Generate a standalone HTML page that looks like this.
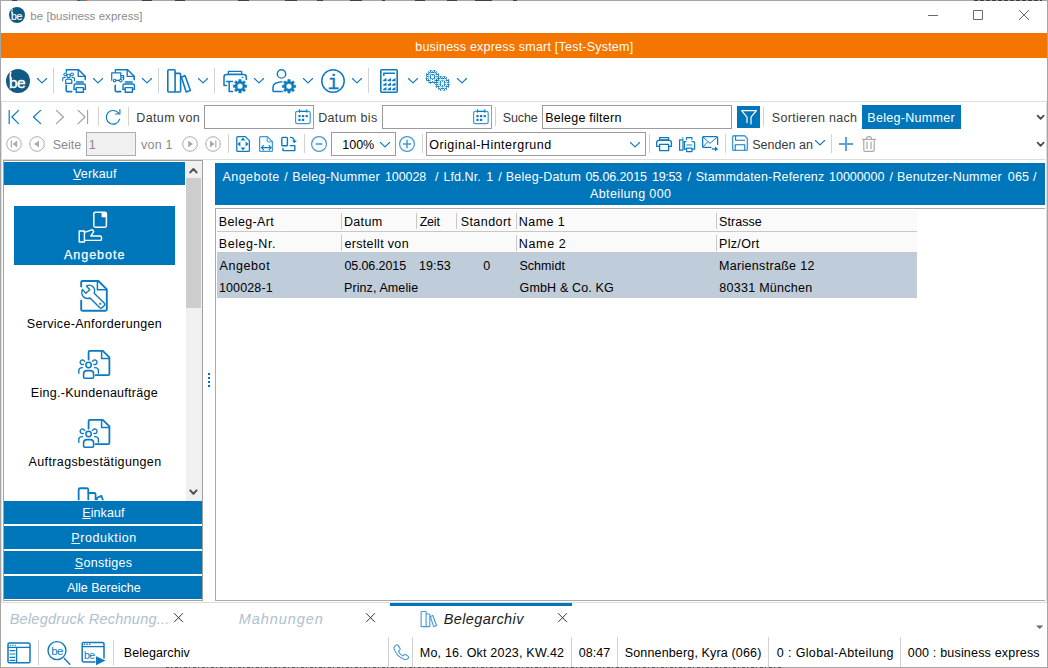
<!DOCTYPE html>
<html lang="de">
<head>
<meta charset="utf-8">
<title>be [business express]</title>
<style>
html,body{margin:0;padding:0;}
body{width:1048px;height:668px;overflow:hidden;background:#fff;position:relative;font-family:"Liberation Sans",sans-serif;}
#w{position:absolute;left:0;top:0;width:1048px;height:668px;overflow:hidden;background:#fff;}
#w div{position:absolute;}
#w svg{position:absolute;overflow:visible;}
.t{position:absolute;white-space:pre;line-height:20px;font-family:"Liberation Sans",sans-serif;}
.t u{text-decoration:underline;text-underline-offset:1px;}
</style>
</head>
<body>
<div id="w">
<div style="left:1px;top:33px;width:1046px;height:25px;background:#f47500;"></div>
<div style="left:1px;top:101px;width:1046px;height:1px;background:#dcdcdc;"></div>
<div style="left:1px;top:101px;width:1px;height:502px;background:#dcdcdc;"></div>
<div style="left:1046px;top:101px;width:1px;height:502px;background:#dcdcdc;"></div>
<div style="left:1px;top:602px;width:1046px;height:1px;background:#dcdcdc;"></div>
<div style="left:3px;top:159px;width:1042px;height:1px;background:#dcdcdc;"></div>
<div style="left:53px;top:68px;width:1px;height:25px;background:#d2d2d2;"></div>
<div style="left:158px;top:68px;width:1px;height:25px;background:#d2d2d2;"></div>
<div style="left:214px;top:68px;width:1px;height:25px;background:#d2d2d2;"></div>
<div style="left:368px;top:68px;width:1px;height:25px;background:#d2d2d2;"></div>
<div style="left:98px;top:107px;width:1px;height:19px;background:#d2d2d2;"></div>
<div style="left:128px;top:107px;width:1px;height:19px;background:#d2d2d2;"></div>
<div style="left:495px;top:107px;width:1px;height:19px;background:#d2d2d2;"></div>
<div style="left:763px;top:107px;width:1px;height:19px;background:#d2d2d2;"></div>
<div style="left:228px;top:134px;width:1px;height:19px;background:#d2d2d2;"></div>
<div style="left:304px;top:134px;width:1px;height:19px;background:#d2d2d2;"></div>
<div style="left:422px;top:134px;width:1px;height:19px;background:#d2d2d2;"></div>
<div style="left:649px;top:134px;width:1px;height:19px;background:#d2d2d2;"></div>
<div style="left:725px;top:134px;width:1px;height:19px;background:#d2d2d2;"></div>
<div style="left:831px;top:134px;width:1px;height:19px;background:#d2d2d2;"></div>
<div style="left:204px;top:105px;width:110px;height:24px;background:#fff;border:1px solid #9a9aa0;box-sizing:border-box"></div>
<div style="left:382px;top:105px;width:110px;height:24px;background:#fff;border:1px solid #9a9aa0;box-sizing:border-box"></div>
<div style="left:542px;top:105px;width:190px;height:24px;background:#fff;border:1px solid #9a9aa0;box-sizing:border-box"></div>
<div style="left:737px;top:106px;width:23px;height:22px;background:#0076ba;"></div>
<div style="left:862px;top:105px;width:99px;height:24px;background:#0076ba;"></div>
<div style="left:86px;top:132px;width:50px;height:24px;background:#f0f0f0;border:1px solid #adadad;box-sizing:border-box"></div>
<div style="left:331px;top:132px;width:65px;height:24px;background:#fff;border:1px solid #9a9aa0;box-sizing:border-box"></div>
<div style="left:426px;top:132px;width:220px;height:24px;background:#fff;border:1px solid #9a9aa0;box-sizing:border-box"></div>
<div style="left:3px;top:160px;width:200px;height:441px;background:#fff;border:1px solid #a0a0a0;box-sizing:border-box"></div>
<div style="left:4px;top:162px;width:181px;height:23px;background:#0076ba;"></div>
<div style="left:186px;top:161px;width:16px;height:340px;background:#f0f0f0;"></div>
<div style="left:186px;top:178px;width:15px;height:130px;background:#cdcdcd;"></div>
<div style="left:14px;top:206px;width:161px;height:59px;background:#0076ba;"></div>
<div style="left:4px;top:501px;width:198px;height:23px;background:#0076ba;"></div>
<div style="left:4px;top:526px;width:198px;height:23px;background:#0076ba;"></div>
<div style="left:4px;top:551px;width:198px;height:23px;background:#0076ba;"></div>
<div style="left:4px;top:576px;width:198px;height:23px;background:#0076ba;"></div>
<div style="left:215px;top:163px;width:830px;height:42px;background:#0076ba;"></div>
<div style="left:215px;top:208px;width:830px;height:1px;background:#a9abb3;"></div>
<div style="left:215px;top:208px;width:1px;height:393px;background:#a9abb3;"></div>
<div style="left:215px;top:600px;width:830px;height:1px;background:#a9abb3;"></div>
<div style="left:217px;top:210px;width:700px;height:21px;background:#fafafa;"></div>
<div style="left:217px;top:231px;width:700px;height:1px;background:#c8c8c8;"></div>
<div style="left:217px;top:232px;width:700px;height:20px;background:#fafafa;"></div>
<div style="left:217px;top:252px;width:700px;height:1px;background:#c4c8cc;"></div>
<div style="left:217px;top:253px;width:700px;height:44px;background:#bfccd9;"></div>
<div style="left:217px;top:297px;width:700px;height:1px;background:#c6c8ca;"></div>
<div style="left:341px;top:213px;width:1px;height:16px;background:#c9c9c9;"></div>
<div style="left:416px;top:213px;width:1px;height:16px;background:#c9c9c9;"></div>
<div style="left:456px;top:213px;width:1px;height:16px;background:#c9c9c9;"></div>
<div style="left:516px;top:213px;width:1px;height:16px;background:#c9c9c9;"></div>
<div style="left:716px;top:213px;width:1px;height:16px;background:#c9c9c9;"></div>
<div style="left:341px;top:235px;width:1px;height:16px;background:#c9c9c9;"></div>
<div style="left:516px;top:235px;width:1px;height:16px;background:#c9c9c9;"></div>
<div style="left:716px;top:235px;width:1px;height:16px;background:#c9c9c9;"></div>
<div style="left:390px;top:603px;width:182px;height:3px;background:#0076ba;"></div>
<div style="left:38px;top:640px;width:1px;height:25px;background:#d2d2d2;"></div>
<div style="left:113px;top:640px;width:1px;height:25px;background:#d2d2d2;"></div>
<div style="left:388px;top:637px;width:1px;height:30px;background:#d2d2d2;"></div>
<div style="left:412px;top:637px;width:1px;height:30px;background:#d2d2d2;"></div>
<div style="left:571px;top:637px;width:1px;height:30px;background:#d2d2d2;"></div>
<div style="left:617px;top:637px;width:1px;height:30px;background:#d2d2d2;"></div>
<div style="left:768px;top:637px;width:1px;height:30px;background:#d2d2d2;"></div>
<div style="left:900px;top:637px;width:1px;height:30px;background:#d2d2d2;"></div>
<div style="left:0px;top:0px;width:1048px;height:1px;background:#a5a5a5;"></div>
<div style="left:0px;top:0px;width:1px;height:668px;background:#a5a5a5;"></div>
<div style="left:1047px;top:0px;width:1px;height:668px;background:#a5a5a5;"></div>
<div style="left:0px;top:667px;width:1048px;height:1px;background:#a5a5a5;"></div>
<div style="left:12px;top:0px;width:5px;height:1px;background:#3a3e58;"></div>
<div style="left:142px;top:0px;width:10px;height:1px;background:#3a3e58;"></div>
<div style="left:175px;top:0px;width:10px;height:1px;background:#3a3e58;"></div>
<div style="left:238px;top:0px;width:11px;height:1px;background:#3a3e58;"></div>
<div style="left:285px;top:0px;width:12px;height:1px;background:#3a3e58;"></div>
<div style="left:317px;top:0px;width:6px;height:1px;background:#3a3e58;"></div>
<div style="left:350px;top:0px;width:12px;height:1px;background:#3a3e58;"></div>
<div style="left:382px;top:0px;width:3px;height:1px;background:#3a3e58;"></div>
<div style="left:415px;top:0px;width:10px;height:1px;background:#3a3e58;"></div>
<div style="left:447px;top:0px;width:10px;height:1px;background:#3a3e58;"></div>
<div style="left:475px;top:0px;width:17px;height:1px;background:#3a3e58;"></div>
<div style="left:513px;top:0px;width:4px;height:1px;background:#3a3e58;"></div>
<div style="left:77px;top:0px;width:3px;height:1px;background:#6a3a90;"></div>
<div style="left:80px;top:0px;width:3px;height:1px;background:#1e90c0;"></div>
<div style="left:83px;top:0px;width:4px;height:1px;background:#d06020;"></div>
<div style="left:974px;top:0;width:68px;height:1px;background:repeating-linear-gradient(90deg,#3a3e58 0 4px,#9a9a9a 4px 6px)"></div>
<div style="left:166px;top:667px;width:616px;height:1px;background:repeating-linear-gradient(90deg,#555 0 3px,#a5a5a5 3px 5px,#555 5px 6px,#a5a5a5 6px 9px)"></div>
<svg width="1048" height="668" viewBox="0 0 1048 668" style="left:0;top:0">
<circle cx="17" cy="15" r="8" fill="#0f5b84" stroke="none" stroke-width="0"/>
<text x="11" y="19.6" font-family="'Liberation Sans',sans-serif" font-size="10.5" letter-spacing="-0.4" fill="#fff" stroke="#fff" stroke-width="0.2">be</text>
<path d="M12.1 9.4 Q11.5 11.5 12.1 13.6" fill="none" stroke="#fff" stroke-width="1" stroke-linecap="round" stroke-linejoin="round"/>
<path d="M928 15.5 H938" fill="none" stroke="#6a6a6a" stroke-width="1"/>
<path d="M973.5 10.5 H982.5 V19.5 H973.5 Z" fill="none" stroke="#6a6a6a" stroke-width="1"/>
<path d="M1019 10 L1029 20 M1029 10 L1019 20" fill="none" stroke="#6a6a6a" stroke-width="1"/>
<circle cx="18" cy="81" r="12" fill="#0f5b84" stroke="none" stroke-width="0"/>
<text x="9" y="88" font-family="'Liberation Sans',sans-serif" font-size="15.5" letter-spacing="-0.6" fill="#fff" stroke="#fff" stroke-width="0.35">be</text>
<path d="M10.7 72.2 Q9.7 76 10.7 80" fill="none" stroke="#fff" stroke-width="1.5" stroke-linecap="round" stroke-linejoin="round"/>
<path d="M37.4 78.5 l4.6 4.4 l4.6 -4.4" fill="none" stroke="#0d7abf" stroke-width="1.1" stroke-linecap="round" stroke-linejoin="round"/>
<path d="M93.4 78.5 l4.6 4.4 l4.6 -4.4" fill="none" stroke="#0d7abf" stroke-width="1.1" stroke-linecap="round" stroke-linejoin="round"/>
<path d="M142.4 78.5 l4.6 4.4 l4.6 -4.4" fill="none" stroke="#0d7abf" stroke-width="1.1" stroke-linecap="round" stroke-linejoin="round"/>
<path d="M198.4 78.5 l4.6 4.4 l4.6 -4.4" fill="none" stroke="#0d7abf" stroke-width="1.1" stroke-linecap="round" stroke-linejoin="round"/>
<path d="M254.4 78.5 l4.6 4.4 l4.6 -4.4" fill="none" stroke="#0d7abf" stroke-width="1.1" stroke-linecap="round" stroke-linejoin="round"/>
<path d="M303.4 78.5 l4.6 4.4 l4.6 -4.4" fill="none" stroke="#0d7abf" stroke-width="1.1" stroke-linecap="round" stroke-linejoin="round"/>
<path d="M352.4 78.5 l4.6 4.4 l4.6 -4.4" fill="none" stroke="#0d7abf" stroke-width="1.1" stroke-linecap="round" stroke-linejoin="round"/>
<path d="M408.4 78.5 l4.6 4.4 l4.6 -4.4" fill="none" stroke="#0d7abf" stroke-width="1.1" stroke-linecap="round" stroke-linejoin="round"/>
<path d="M457.4 78.5 l4.6 4.4 l4.6 -4.4" fill="none" stroke="#0d7abf" stroke-width="1.1" stroke-linecap="round" stroke-linejoin="round"/>
<path d="M4.6 0.8 H16.6 L23.2 7.2 V10.6" fill="none" stroke="#0d7abf" stroke-width="1.6" stroke-linecap="round" stroke-linejoin="round" transform="translate(62 69)"/>
<path d="M16.2 1.2 V7.4 H22.8" fill="none" stroke="#0d7abf" stroke-width="1.3" stroke-linecap="round" stroke-linejoin="round" transform="translate(62 69)"/>
<path d="M4.2 16.4 V21.6 Q4.2 22.6 5.2 22.6 H9.8" fill="none" stroke="#0d7abf" stroke-width="1.6" stroke-linecap="round" stroke-linejoin="round" transform="translate(62 69)"/>
<path d="M14.4 13 H21.2" fill="none" stroke="#0d7abf" stroke-width="1.6" stroke-linecap="round" stroke-linejoin="round" transform="translate(62 69)"/>
<path d="M12 20.4 V16.6 Q12 15 13.6 15 H21.8 Q23.4 15 23.4 16.6 V20.4" fill="none" stroke="#0d7abf" stroke-width="1.4" stroke-linecap="round" stroke-linejoin="round" transform="translate(62 69)"/>
<path d="M14.2 18.6 H21.4 V23.3 H14.2 Z" fill="none" stroke="#0d7abf" stroke-width="1.4" stroke-linecap="round" stroke-linejoin="round" transform="translate(62 69)"/>
<path d="M12 20.4 H14 M21.6 20.4 H23.4" fill="none" stroke="#0d7abf" stroke-width="1.2" stroke-linecap="round" stroke-linejoin="round" transform="translate(62 69)"/>
<path d="M4.4 1 V3" fill="none" stroke="#0d7abf" stroke-width="1.3" stroke-linecap="round" stroke-linejoin="round" transform="translate(62 69)"/>
<circle cx="3.3" cy="5.4" r="1.4" fill="none" stroke="#0d7abf" stroke-width="1.1" transform="translate(62 69)"/>
<circle cx="10" cy="5.4" r="1.4" fill="none" stroke="#0d7abf" stroke-width="1.1" transform="translate(62 69)"/>
<circle cx="6.6" cy="6.9" r="1.7" fill="none" stroke="#0d7abf" stroke-width="1.1" transform="translate(62 69)"/>
<path d="M0.7 11.8 V9.6 Q0.7 8.4 3.2 8.4" fill="none" stroke="#0d7abf" stroke-width="1.1" stroke-linecap="round" stroke-linejoin="round" transform="translate(62 69)"/>
<path d="M12.5 11.8 V9.6 Q12.5 8.4 10 8.4" fill="none" stroke="#0d7abf" stroke-width="1.1" stroke-linecap="round" stroke-linejoin="round" transform="translate(62 69)"/>
<path d="M3.6 14.4 V12 Q3.6 10.2 5.4 10.2 H7.8 Q9.8 10.2 9.8 12 V14.4 Z" fill="none" stroke="#0d7abf" stroke-width="1.2" stroke-linecap="round" stroke-linejoin="round" transform="translate(62 69)"/>
<path d="M4.6 0.8 H16.6 L23.2 7.2 V10.6" fill="none" stroke="#0d7abf" stroke-width="1.6" stroke-linecap="round" stroke-linejoin="round" transform="translate(111 69)"/>
<path d="M16.2 1.2 V7.4 H22.8" fill="none" stroke="#0d7abf" stroke-width="1.3" stroke-linecap="round" stroke-linejoin="round" transform="translate(111 69)"/>
<path d="M4.2 16.4 V21.6 Q4.2 22.6 5.2 22.6 H9.8" fill="none" stroke="#0d7abf" stroke-width="1.6" stroke-linecap="round" stroke-linejoin="round" transform="translate(111 69)"/>
<path d="M14.4 13 H21.2" fill="none" stroke="#0d7abf" stroke-width="1.6" stroke-linecap="round" stroke-linejoin="round" transform="translate(111 69)"/>
<path d="M12 20.4 V16.6 Q12 15 13.6 15 H21.8 Q23.4 15 23.4 16.6 V20.4" fill="none" stroke="#0d7abf" stroke-width="1.4" stroke-linecap="round" stroke-linejoin="round" transform="translate(111 69)"/>
<path d="M14.2 18.6 H21.4 V23.3 H14.2 Z" fill="none" stroke="#0d7abf" stroke-width="1.4" stroke-linecap="round" stroke-linejoin="round" transform="translate(111 69)"/>
<path d="M12 20.4 H14 M21.6 20.4 H23.4" fill="none" stroke="#0d7abf" stroke-width="1.2" stroke-linecap="round" stroke-linejoin="round" transform="translate(111 69)"/>
<path d="M4.4 1 V3.2" fill="none" stroke="#0d7abf" stroke-width="1.3" stroke-linecap="round" stroke-linejoin="round" transform="translate(111 69)"/>
<path d="M0.7 11.2 V3.9 H9.8 V10.4" fill="none" stroke="#0d7abf" stroke-width="1.2" stroke-linecap="round" stroke-linejoin="round" transform="translate(111 69)"/>
<path d="M10 6.6 H12.6 V10.6" fill="none" stroke="#0d7abf" stroke-width="1.2" stroke-linecap="round" stroke-linejoin="round" transform="translate(111 69)"/>
<circle cx="3.6" cy="11.6" r="1.3" fill="none" stroke="#0d7abf" stroke-width="1.1" transform="translate(111 69)"/>
<circle cx="9.8" cy="11.6" r="1.3" fill="none" stroke="#0d7abf" stroke-width="1.1" transform="translate(111 69)"/>
<path d="M5.2 11.4 H8.2" fill="none" stroke="#0d7abf" stroke-width="1.1" stroke-linecap="round" stroke-linejoin="round" transform="translate(111 69)"/>
<path d="M11 8.6 H12.4" fill="none" stroke="#0d7abf" stroke-width="1" stroke-linecap="round" stroke-linejoin="round" transform="translate(111 69)"/>
<path d="M1.9 0.8 H7 Q8.1 0.8 8.1 1.9 V21.9 Q8.1 23 7 23 H1.9 Q0.8 23 0.8 21.9 V1.9 Q0.8 0.8 1.9 0.8 Z" fill="none" stroke="#0d7abf" stroke-width="1.6" stroke-linecap="round" stroke-linejoin="round" transform="translate(167 69) scale(1)"/>
<path d="M8.3 4.4 H12.6 Q13.6 4.4 13.6 5.4 V22 Q13.6 23 12.6 23 H8.3" fill="none" stroke="#0d7abf" stroke-width="1.6" stroke-linecap="round" stroke-linejoin="round" transform="translate(167 69) scale(1)"/>
<path d="M14.4 8.2 L18 6.6 L23.4 21.4 L19.2 23 Z" fill="none" stroke="#0d7abf" stroke-width="1.6" stroke-linecap="round" stroke-linejoin="round" transform="translate(167 69) scale(1)"/>
<path d="M5.4 2.4 H18.6 V5.4 H5.4 Z" fill="none" stroke="#0d7abf" stroke-width="1.4" stroke-linecap="round" stroke-linejoin="round" transform="translate(223 69)"/>
<path d="M3.4 16.4 H1 V8 Q1 5.6 3.6 5.6 H20.6 Q23.3 5.6 23.3 8.2 V10.4" fill="none" stroke="#0d7abf" stroke-width="1.5" stroke-linecap="round" stroke-linejoin="round" transform="translate(223 69)"/>
<path d="M3.6 12.6 H9.6 M6.2 12.6 V22.4 H9.6" fill="none" stroke="#0d7abf" stroke-width="1.5" stroke-linecap="round" stroke-linejoin="round" transform="translate(223 69)"/>
<circle cx="19.6" cy="8.6" r="0.6" fill="#0d7abf" stroke="#0d7abf" stroke-width="0.6" transform="translate(223 69)"/>
<circle cx="240" cy="86.2" r="8.1" fill="#fff"/>
<path d="M241.17 92.90 L238.83 92.90 L238.83 91.06 L237.39 90.46 L236.09 91.76 L234.44 90.11 L235.74 88.81 L235.14 87.37 L233.30 87.37 L233.30 85.03 L235.14 85.03 L235.74 83.59 L234.44 82.29 L236.09 80.64 L237.39 81.94 L238.83 81.34 L238.83 79.50 L241.17 79.50 L241.17 81.34 L242.61 81.94 L243.91 80.64 L245.56 82.29 L244.26 83.59 L244.86 85.03 L246.70 85.03 L246.70 87.37 L244.86 87.37 L244.26 88.81 L245.56 90.11 L243.91 91.76 L242.61 90.46 L241.17 91.06Z M237.10 86.20 a2.9 2.9 0 1 0 5.8 0 a2.9 2.9 0 1 0 -5.8 0Z" fill="#0d7abf" fill-rule="evenodd" stroke="#0d7abf" stroke-width="0.6" stroke-linejoin="round"/>
<circle cx="281.5" cy="73.9" r="4.2" fill="none" stroke="#0d7abf" stroke-width="1.4"/>
<path d="M282.3 81.8 Q273 82.4 273 87.2 V90.4 Q273 91.6 274.2 91.6 H282.3" fill="none" stroke="#0d7abf" stroke-width="1.5" stroke-linecap="round" stroke-linejoin="round"/>
<circle cx="289" cy="86.3" r="8.1" fill="#fff"/>
<path d="M290.17 93.00 L287.83 93.00 L287.83 91.16 L286.39 90.56 L285.09 91.86 L283.44 90.21 L284.74 88.91 L284.14 87.47 L282.30 87.47 L282.30 85.13 L284.14 85.13 L284.74 83.69 L283.44 82.39 L285.09 80.74 L286.39 82.04 L287.83 81.44 L287.83 79.60 L290.17 79.60 L290.17 81.44 L291.61 82.04 L292.91 80.74 L294.56 82.39 L293.26 83.69 L293.86 85.13 L295.70 85.13 L295.70 87.47 L293.86 87.47 L293.26 88.91 L294.56 90.21 L292.91 91.86 L291.61 90.56 L290.17 91.16Z M286.10 86.30 a2.9 2.9 0 1 0 5.8 0 a2.9 2.9 0 1 0 -5.8 0Z" fill="#0d7abf" fill-rule="evenodd" stroke="#0d7abf" stroke-width="0.6" stroke-linejoin="round"/>
<circle cx="333" cy="81" r="11.2" fill="none" stroke="#0d7abf" stroke-width="1.5"/>
<text x="333.3" y="88.9" text-anchor="middle" font-family="'Liberation Mono',monospace" font-size="19.5" fill="#0d7abf" stroke="#0d7abf" stroke-width="0.3">i</text>
<path d="M381.8 69.8 H396.2 Q397.2 69.8 397.2 70.8 V91.2 Q397.2 92.2 396.2 92.2 H381.8 Q380.8 92.2 380.8 91.2 V70.8 Q380.8 69.8 381.8 69.8 Z" fill="none" stroke="#0d7abf" stroke-width="1.6" stroke-linecap="round" stroke-linejoin="round"/>
<path d="M383.8 75.4 V73.2 H394.4" fill="none" stroke="#0d7abf" stroke-width="1.5" stroke-linecap="round" stroke-linejoin="round"/>
<path d="M386.5 77.9 V81.2 H383.2 V80.1 Z" fill="#0d7abf"/>
<path d="M391 77.9 V81.2 H387.7 V80.1 Z" fill="#0d7abf"/>
<path d="M395.5 77.9 V81.2 H392.2 V80.1 Z" fill="#0d7abf"/>
<path d="M386.5 82.4 V85.7 H383.2 V84.6 Z" fill="#0d7abf"/>
<path d="M391 82.4 V85.7 H387.7 V84.6 Z" fill="#0d7abf"/>
<path d="M395.5 82.4 V85.7 H392.2 V84.6 Z" fill="#0d7abf"/>
<path d="M386.5 86.9 V90.2 H383.2 V89.1 Z" fill="#0d7abf"/>
<path d="M391 86.9 V90.2 H387.7 V89.1 Z" fill="#0d7abf"/>
<path d="M395.5 86.9 V90.2 H392.2 V89.1 Z" fill="#0d7abf"/>
<defs><pattern id="dth" width="2" height="2" patternUnits="userSpaceOnUse"><rect x="1" y="1" width="1" height="1" fill="#fff"/></pattern></defs>
<path d="M438.65 78.37 L437.82 80.38 L436.38 79.82 L435.32 80.88 L435.88 82.32 L433.87 83.15 L433.25 81.74 L431.75 81.74 L431.13 83.15 L429.12 82.32 L429.68 80.88 L428.62 79.82 L427.18 80.38 L426.35 78.37 L427.76 77.75 L427.76 76.25 L426.35 75.63 L427.18 73.62 L428.62 74.18 L429.68 73.12 L429.12 71.68 L431.13 70.85 L431.75 72.26 L433.25 72.26 L433.87 70.85 L435.88 71.68 L435.32 73.12 L436.38 74.18 L437.82 73.62 L438.65 75.63 L437.24 76.25 L437.24 77.75Z" fill="#fff" stroke="#0d7abf" stroke-width="1.7" stroke-linejoin="round" opacity="0.9"/>
<circle cx="432.5" cy="77" r="2.3" fill="none" stroke="#0d7abf" stroke-width="1.5" opacity="0.9"/>
<path d="M449.04 84.86 L448.16 86.99 L446.63 86.40 L445.50 87.53 L446.09 89.06 L443.96 89.94 L443.30 88.44 L441.70 88.44 L441.04 89.94 L438.91 89.06 L439.50 87.53 L438.37 86.40 L436.84 86.99 L435.96 84.86 L437.46 84.20 L437.46 82.60 L435.96 81.94 L436.84 79.81 L438.37 80.40 L439.50 79.27 L438.91 77.74 L441.04 76.86 L441.70 78.36 L443.30 78.36 L443.96 76.86 L446.09 77.74 L445.50 79.27 L446.63 80.40 L448.16 79.81 L449.04 81.94 L447.54 82.60 L447.54 84.20Z" fill="#fff" stroke="#0d7abf" stroke-width="1.7" stroke-linejoin="round" opacity="0.9"/>
<circle cx="442.5" cy="83.4" r="2.5" fill="none" stroke="#0d7abf" stroke-width="1.5" opacity="0.9"/>
<rect x="424" y="68" width="28" height="26" fill="url(#dth)" shape-rendering="crispEdges"/>
<path d="M9.2 110 V124" fill="none" stroke="#0d7abf" stroke-width="1.2"/>
<path d="M18.6 110.4 L11.9 117 L18.6 123.6" fill="none" stroke="#0d7abf" stroke-width="1.2" stroke-linecap="round" stroke-linejoin="round"/>
<path d="M40.6 110.4 L33.5 117 L40.6 123.6" fill="none" stroke="#0d7abf" stroke-width="1.2" stroke-linecap="round" stroke-linejoin="round"/>
<path d="M56.3 110.4 L63.5 117 L56.3 123.6" fill="none" stroke="#9a9a9a" stroke-width="1.05" stroke-linecap="round" stroke-linejoin="round"/>
<path d="M78.2 110.4 L85 117 L78.2 123.6" fill="none" stroke="#9a9a9a" stroke-width="1.05" stroke-linecap="round" stroke-linejoin="round"/>
<path d="M87.6 110 V124" fill="none" stroke="#9a9a9a" stroke-width="1.05"/>
<path d="M119.6 119.4 A6.8 6.8 0 1 1 118.6 113.2" fill="none" stroke="#0d7abf" stroke-width="1.15" stroke-linecap="round" stroke-linejoin="round"/>
<path d="M119.9 109.6 V114 H115.6" fill="none" stroke="#0d7abf" stroke-width="1.15" stroke-linecap="round" stroke-linejoin="round"/>
<path d="M2.2 2.4 H13.6 Q15.2 2.4 15.2 4 V13 Q15.2 14.6 13.6 14.6 H2.2 Q0.6 14.6 0.6 13 V4 Q0.6 2.4 2.2 2.4 Z" fill="none" stroke="#3f9ad2" stroke-width="1.2" stroke-linecap="round" stroke-linejoin="round" transform="translate(295 109)"/>
<path d="M4.5 0.2 V3.8 M11.8 0.2 V3.8" fill="none" stroke="#0d7abf" stroke-width="1.1" transform="translate(295 109)"/>
<path d="M4.5 2.4 H11.8" fill="none" stroke="#0d7abf" stroke-width="1.2" transform="translate(295 109)"/>
<rect x="3.4" y="6" width="2.2" height="2.2" fill="#0d7abf" transform="translate(295 109)"/>
<rect x="7" y="6" width="2.2" height="2.2" fill="#0d7abf" transform="translate(295 109)"/>
<rect x="10.6" y="6" width="2.2" height="2.2" fill="#0d7abf" transform="translate(295 109)"/>
<rect x="3.4" y="9.8" width="2.2" height="2.2" fill="#0d7abf" transform="translate(295 109)"/>
<rect x="7" y="9.8" width="2.2" height="2.2" fill="#0d7abf" transform="translate(295 109)"/>
<path d="M2.2 2.4 H13.6 Q15.2 2.4 15.2 4 V13 Q15.2 14.6 13.6 14.6 H2.2 Q0.6 14.6 0.6 13 V4 Q0.6 2.4 2.2 2.4 Z" fill="none" stroke="#3f9ad2" stroke-width="1.2" stroke-linecap="round" stroke-linejoin="round" transform="translate(473 109)"/>
<path d="M4.5 0.2 V3.8 M11.8 0.2 V3.8" fill="none" stroke="#0d7abf" stroke-width="1.1" transform="translate(473 109)"/>
<path d="M4.5 2.4 H11.8" fill="none" stroke="#0d7abf" stroke-width="1.2" transform="translate(473 109)"/>
<rect x="3.4" y="6" width="2.2" height="2.2" fill="#0d7abf" transform="translate(473 109)"/>
<rect x="7" y="6" width="2.2" height="2.2" fill="#0d7abf" transform="translate(473 109)"/>
<rect x="10.6" y="6" width="2.2" height="2.2" fill="#0d7abf" transform="translate(473 109)"/>
<rect x="3.4" y="9.8" width="2.2" height="2.2" fill="#0d7abf" transform="translate(473 109)"/>
<rect x="7" y="9.8" width="2.2" height="2.2" fill="#0d7abf" transform="translate(473 109)"/>
<path d="M741.6 110.6 H756.4 L751 117.2 V124 M741.6 110.6 L747 117.2 V122.6" fill="none" stroke="#fff" stroke-width="1.2" stroke-linecap="round" stroke-linejoin="round"/>
<path d="M1037.6 115.6 L1040.6 118.8 L1043.6 115.6" fill="none" stroke="#4a4a4a" stroke-width="1.8" stroke-linecap="round" stroke-linejoin="round"/>
<path d="M1037.6 142.6 L1040.6 145.8 L1043.6 142.6" fill="none" stroke="#4a4a4a" stroke-width="1.8" stroke-linecap="round" stroke-linejoin="round"/>
<circle cx="14" cy="144" r="7.3" fill="none" stroke="#adadad" stroke-width="1"/>
<circle cx="37" cy="144" r="7.3" fill="none" stroke="#adadad" stroke-width="1"/>
<circle cx="190" cy="144" r="7.3" fill="none" stroke="#adadad" stroke-width="1"/>
<circle cx="213" cy="144" r="7.3" fill="none" stroke="#adadad" stroke-width="1"/>
<path d="M17.2 140.4 V147.6 L12.6 144 Z" fill="#ababab"/>
<path d="M11.4 140.4 V147.6" fill="none" stroke="#ababab" stroke-width="1.2"/>
<path d="M39 140.4 V147.6 L34.2 144 Z" fill="#ababab"/>
<path d="M188.2 140.4 V147.6 L193 144 Z" fill="#ababab"/>
<path d="M210 140.4 V147.6 L214.6 144 Z" fill="#ababab"/>
<path d="M215.8 140.4 V147.6" fill="none" stroke="#ababab" stroke-width="1.2"/>
<path d="M237.8 136.6 H245.4 L249.4 140.6 V150.4 Q249.4 151.4 248.4 151.4 H237.8 Q236.8 151.4 236.8 150.4 V137.6 Q236.8 136.6 237.8 136.6 Z" fill="none" stroke="#0d7abf" stroke-width="1.3" stroke-linecap="round" stroke-linejoin="round"/>
<path d="M243 137.4 L245.4 140.4 H240.6 Z" fill="#0d7abf"/>
<path d="M243 150.6 L245.4 147.6 H240.6 Z" fill="#0d7abf"/>
<path d="M237.4 144 L240.4 141.6 V146.4 Z" fill="#0d7abf"/>
<path d="M248.6 144 L245.6 141.6 V146.4 Z" fill="#0d7abf"/>
<path d="M260.6 136.6 H267.4 L272.4 141.6 V150.4 Q272.4 151.4 271.4 151.4 H260.6 Q259.6 151.4 259.6 150.4 V137.6 Q259.6 136.6 260.6 136.6 Z" fill="none" stroke="#3f9ad2" stroke-width="1.3" stroke-linecap="round" stroke-linejoin="round"/>
<path d="M267.2 137 V141.8 H272" fill="none" stroke="#3f9ad2" stroke-width="1" stroke-linecap="round" stroke-linejoin="round"/>
<path d="M261.6 147.6 H271 M263.6 145.4 L261.4 147.6 L263.6 149.8 M269 145.4 L271.2 147.6 L269 149.8" fill="none" stroke="#0d7abf" stroke-width="1.1" stroke-linecap="round" stroke-linejoin="round"/>
<path d="M282.6 137.4 H286.6 Q287.4 137.4 287.4 138.2 V145 Q287.4 145.8 286.6 145.8 H282.6 Q281.8 145.8 281.8 145 V138.2 Q281.8 137.4 282.6 137.4 Z" fill="none" stroke="#0d7abf" stroke-width="1.4" stroke-linecap="round" stroke-linejoin="round"/>
<path d="M283 148.4 V150.6 H294.8 V145.6 H290.2" fill="none" stroke="#0d7abf" stroke-width="1.4" stroke-linecap="round" stroke-linejoin="round"/>
<path d="M290.4 137.4 Q294.2 137.6 294.4 141.4" fill="none" stroke="#0d7abf" stroke-width="1.2" stroke-linecap="round" stroke-linejoin="round"/>
<path d="M292 140.6 H296.8 L294.4 143.2 Z" fill="#0d7abf"/>
<circle cx="319" cy="144" r="7.4" fill="none" stroke="#3f9ad2" stroke-width="1.2"/>
<path d="M315.6 144 H322.4" fill="none" stroke="#3f9ad2" stroke-width="1.5"/>
<circle cx="407" cy="144" r="7.4" fill="none" stroke="#3f9ad2" stroke-width="1.2"/>
<path d="M402.8 144 H411.2 M407 139.8 V148.2" fill="none" stroke="#3f9ad2" stroke-width="1.5"/>
<path d="M380.4 142.5 l4.6 4.4 l4.6 -4.4" fill="none" stroke="#0d7abf" stroke-width="1.1" stroke-linecap="round" stroke-linejoin="round"/>
<path d="M630.4 142.5 l4.6 4.4 l4.6 -4.4" fill="none" stroke="#0d7abf" stroke-width="1.1" stroke-linecap="round" stroke-linejoin="round"/>
<path d="M3.6 0.7 H12.6 V3 H3.6 Z" fill="none" stroke="#0d7abf" stroke-width="1.3" stroke-linecap="round" stroke-linejoin="round" transform="translate(656 137)"/>
<path d="M3.2 9.4 H0.7 V5.6 Q0.7 3.4 2.9 3.4 H13.2 Q15.4 3.4 15.4 5.6 V9.4 H13" fill="none" stroke="#0d7abf" stroke-width="1.3" stroke-linecap="round" stroke-linejoin="round" transform="translate(656 137)"/>
<path d="M3.6 7.4 H12.6 V13.6 H3.6 Z" fill="none" stroke="#0d7abf" stroke-width="1.4" stroke-linecap="round" stroke-linejoin="round" transform="translate(656 137)"/>
<path d="M679.6 139.8 H683 V150.2 H679.6 Z" fill="none" stroke="#0d7abf" stroke-width="1.2" stroke-linecap="round" stroke-linejoin="round"/>
<path d="M682.8 137 V139.6" fill="none" stroke="#3f9ad2" stroke-width="1"/>
<path d="M686 141.6 H684.4 V149.2 H686.4 M692 141.6 H693.4 Q694.6 141.6 694.6 142.8 V149.2 H692.2" fill="none" stroke="#0d7abf" stroke-width="1.2" stroke-linecap="round" stroke-linejoin="round"/>
<path d="M686.4 139.6 V137.6 H692 V139.6" fill="none" stroke="#0d7abf" stroke-width="1.1" stroke-linecap="round" stroke-linejoin="round"/>
<path d="M686.6 148.2 H692 V151.6 H686.6 Z" fill="none" stroke="#0d7abf" stroke-width="1.2" stroke-linecap="round" stroke-linejoin="round"/>
<path d="M686.4 145 H692.4" fill="none" stroke="#3f9ad2" stroke-width="1.2"/>
<path d="M703.6 136.6 H716.4 Q717.6 136.6 717.6 137.8 V144.4 M711 147.4 H703.6 Q702.6 147.4 702.6 146.4 V137.8 Q702.6 136.6 703.6 136.6" fill="none" stroke="#0d7abf" stroke-width="1.3" stroke-linecap="round" stroke-linejoin="round"/>
<path d="M703.4 137.4 L710 143.4 L716.8 137.4 M703.2 146.6 L707.6 142" fill="none" stroke="#0d7abf" stroke-width="1" stroke-linecap="round" stroke-linejoin="round"/>
<path d="M712 149 H716" fill="none" stroke="#0d7abf" stroke-width="1.4"/>
<path d="M715 146.4 L718.2 149 L715 151.6 Z" fill="#0d7abf"/>
<path d="M733.8 135.8 H744.6 L747.4 138.6 V149.2 Q747.4 150.4 746.2 150.4 H733.8 Q732.6 150.4 732.6 149.2 V137 Q732.6 135.8 733.8 135.8 Z" fill="none" stroke="#3f9ad2" stroke-width="1.4" stroke-linecap="round" stroke-linejoin="round"/>
<path d="M735.6 136.4 V140.2 H744.6" fill="none" stroke="#0d7abf" stroke-width="1.1" stroke-linecap="round" stroke-linejoin="round"/>
<path d="M735.2 150 V144.8 H744.8 V150" fill="none" stroke="#0d7abf" stroke-width="1.1" stroke-linecap="round" stroke-linejoin="round"/>
<path d="M815.4 140.5 l4.6 4.4 l4.6 -4.4" fill="none" stroke="#0d7abf" stroke-width="1.1" stroke-linecap="round" stroke-linejoin="round"/>
<path d="M839 144 H853 M846 137 V151" fill="none" stroke="#56a6d6" stroke-width="2"/>
<path d="M862 139.4 H876" fill="none" stroke="#ababab" stroke-width="1.2"/>
<path d="M866.4 139 Q866.4 136.6 869 136.6 Q871.6 136.6 871.6 139" fill="none" stroke="#ababab" stroke-width="1.1" stroke-linecap="round" stroke-linejoin="round"/>
<path d="M863.8 140 V150 Q863.8 151.4 865.2 151.4 H872.8 Q874.2 151.4 874.2 150 V140" fill="none" stroke="#ababab" stroke-width="1.2" stroke-linecap="round" stroke-linejoin="round"/>
<path d="M867 141.8 V149 M871 141.8 V149" fill="none" stroke="#ababab" stroke-width="1.3"/>
<path d="M190.2 172.4 L193.4 169 L196.6 172.4" fill="none" stroke="#505050" stroke-width="2" stroke-linecap="round" stroke-linejoin="round"/>
<path d="M190.2 490.4 L193.4 493.8 L196.6 490.4" fill="none" stroke="#505050" stroke-width="2" stroke-linecap="round" stroke-linejoin="round"/>
<path d="M95.4 212.2 H104.8 Q106.4 212.2 106.4 213.8 V225.6 Q106.4 227.2 104.8 227.2 H95.4 Q93.8 227.2 93.8 225.6 V213.8 Q93.8 212.2 95.4 212.2 Z" fill="none" stroke="#fff" stroke-width="1.5" stroke-linecap="round" stroke-linejoin="round"/>
<path d="M101.6 212.4 H105 Q106.2 212.4 106.2 213.6 V217.2 H101.6 Z" fill="#fff"/>
<path d="M79.2 231 H84.4 V242 H79.2 Z" fill="none" stroke="#fff" stroke-width="1.4" stroke-linecap="round" stroke-linejoin="round"/>
<path d="M84.6 232.4 L92.4 229.6 L93.8 231.6 L90.8 236 H100 Q101.6 236 101.6 238.2 Q101.6 240.4 100 240.4 H84.6" fill="none" stroke="#fff" stroke-width="1.4" stroke-linecap="round" stroke-linejoin="round"/>
<path d="M81.2 286.6 V282.2 Q81.2 281 82.4 281 H98.4 L106.8 289.4 V309.6 Q106.8 310.8 105.6 310.8 H82.4 Q81.2 310.8 81.2 309.6 V300.6" fill="none" stroke="#0d7abf" stroke-width="1.9" stroke-linecap="round" stroke-linejoin="round"/>
<path d="M97.4 281.6 V289.8 H106.4" fill="none" stroke="#0d7abf" stroke-width="1.5" stroke-linecap="round" stroke-linejoin="round"/>
<path d="M82.4 289.4 L85.8 293.2 L89.8 289.8 L86.4 286 Q89.8 284 92.8 286.6 Q95.6 289.4 94.2 293.2 L104.4 303.2 Q105.4 304.4 104.4 305.4 L102 307.8 Q101 308.8 99.8 307.8 L90 298 Q86 299.6 83.2 296.6 Q80.8 293.4 82.4 289.4 Z" fill="none" stroke="#0d7abf" stroke-width="1.4" stroke-linecap="round" stroke-linejoin="round"/>
<circle cx="100.2" cy="303.8" r="0.7" fill="#0d7abf" stroke="#0d7abf" stroke-width="0.8"/>
<path d="M10.6 9.6 V2 Q10.6 0.8 11.8 0.8 H24.8 L31.4 7.4 V24 Q31.4 25.2 30.2 25.2 H17.6" fill="none" stroke="#0d7abf" stroke-width="1.8" stroke-linecap="round" stroke-linejoin="round" transform="translate(78 350)"/>
<path d="M23.6 1.4 V8.6 H31" fill="none" stroke="#0d7abf" stroke-width="1.5" stroke-linecap="round" stroke-linejoin="round" transform="translate(78 350)"/>
<circle cx="10.6" cy="15" r="2.7" fill="none" stroke="#0d7abf" stroke-width="1.5" transform="translate(78 350)"/>
<path d="M6.6 11.4 A2.3 2.3 0 1 0 5.4 14.4" fill="none" stroke="#0d7abf" stroke-width="1.4" stroke-linecap="round" stroke-linejoin="round" transform="translate(78 350)"/>
<path d="M14.6 11.4 A2.3 2.3 0 1 1 15.8 14.4" fill="none" stroke="#0d7abf" stroke-width="1.4" stroke-linecap="round" stroke-linejoin="round" transform="translate(78 350)"/>
<path d="M0.8 23.2 V20.4 Q0.8 17.8 4.6 17.6" fill="none" stroke="#0d7abf" stroke-width="1.4" stroke-linecap="round" stroke-linejoin="round" transform="translate(78 350)"/>
<path d="M20.4 23.2 V20.4 Q20.4 17.8 16.6 17.6" fill="none" stroke="#0d7abf" stroke-width="1.4" stroke-linecap="round" stroke-linejoin="round" transform="translate(78 350)"/>
<path d="M5.6 27 V24 Q5.6 20.6 9 20.6 H12.2 Q15.6 20.6 15.6 24 V27 Q15.6 28.2 14.4 28.2 H6.8 Q5.6 28.2 5.6 27 Z" fill="none" stroke="#0d7abf" stroke-width="1.6" stroke-linecap="round" stroke-linejoin="round" transform="translate(78 350)"/>
<path d="M10.6 9.6 V2 Q10.6 0.8 11.8 0.8 H24.8 L31.4 7.4 V24 Q31.4 25.2 30.2 25.2 H17.6" fill="none" stroke="#0d7abf" stroke-width="1.8" stroke-linecap="round" stroke-linejoin="round" transform="translate(78 419)"/>
<path d="M23.6 1.4 V8.6 H31" fill="none" stroke="#0d7abf" stroke-width="1.5" stroke-linecap="round" stroke-linejoin="round" transform="translate(78 419)"/>
<circle cx="10.6" cy="15" r="2.7" fill="none" stroke="#0d7abf" stroke-width="1.5" transform="translate(78 419)"/>
<path d="M6.6 11.4 A2.3 2.3 0 1 0 5.4 14.4" fill="none" stroke="#0d7abf" stroke-width="1.4" stroke-linecap="round" stroke-linejoin="round" transform="translate(78 419)"/>
<path d="M14.6 11.4 A2.3 2.3 0 1 1 15.8 14.4" fill="none" stroke="#0d7abf" stroke-width="1.4" stroke-linecap="round" stroke-linejoin="round" transform="translate(78 419)"/>
<path d="M0.8 23.2 V20.4 Q0.8 17.8 4.6 17.6" fill="none" stroke="#0d7abf" stroke-width="1.4" stroke-linecap="round" stroke-linejoin="round" transform="translate(78 419)"/>
<path d="M20.4 23.2 V20.4 Q20.4 17.8 16.6 17.6" fill="none" stroke="#0d7abf" stroke-width="1.4" stroke-linecap="round" stroke-linejoin="round" transform="translate(78 419)"/>
<path d="M5.6 27 V24 Q5.6 20.6 9 20.6 H12.2 Q15.6 20.6 15.6 24 V27 Q15.6 28.2 14.4 28.2 H6.8 Q5.6 28.2 5.6 27 Z" fill="none" stroke="#0d7abf" stroke-width="1.6" stroke-linecap="round" stroke-linejoin="round" transform="translate(78 419)"/>
<clipPath id="c5"><rect x="70" y="480" width="60" height="20.3"/></clipPath>
<g clip-path="url(#c5)">
<path d="M1.9 0.8 H7 Q8.1 0.8 8.1 1.9 V21.9 Q8.1 23 7 23 H1.9 Q0.8 23 0.8 21.9 V1.9 Q0.8 0.8 1.9 0.8 Z" fill="none" stroke="#0d7abf" stroke-width="1.36364" stroke-linecap="round" stroke-linejoin="round" transform="translate(77.6 487.2) scale(1.32)"/>
<path d="M8.3 4.4 H12.6 Q13.6 4.4 13.6 5.4 V22 Q13.6 23 12.6 23 H8.3" fill="none" stroke="#0d7abf" stroke-width="1.36364" stroke-linecap="round" stroke-linejoin="round" transform="translate(77.6 487.2) scale(1.32)"/>
<path d="M14.4 8.2 L18 6.6 L23.4 21.4 L19.2 23 Z" fill="none" stroke="#0d7abf" stroke-width="1.36364" stroke-linecap="round" stroke-linejoin="round" transform="translate(77.6 487.2) scale(1.32)"/>
</g>
<rect x="208" y="373" width="2" height="2" fill="#0a6fb8"/>
<rect x="208" y="377" width="2" height="2" fill="#0a6fb8"/>
<rect x="208" y="381" width="2" height="2" fill="#0a6fb8"/>
<rect x="208" y="385" width="2" height="2" fill="#0a6fb8"/>
<path d="M174 613.2 L183 622.2 M183 613.2 L174 622.2" fill="none" stroke="#333" stroke-width="1"/>
<path d="M366 613.2 L375 622.2 M375 613.2 L366 622.2" fill="none" stroke="#333" stroke-width="1"/>
<path d="M558 613.2 L567 622.2 M567 613.2 L558 622.2" fill="none" stroke="#333" stroke-width="1"/>
<path d="M1.9 0.8 H7 Q8.1 0.8 8.1 1.9 V21.9 Q8.1 23 7 23 H1.9 Q0.8 23 0.8 21.9 V1.9 Q0.8 0.8 1.9 0.8 Z" fill="none" stroke="#3f9ad2" stroke-width="1.61765" stroke-linecap="round" stroke-linejoin="round" transform="translate(420.6 611) scale(0.68)"/>
<path d="M8.3 4.4 H12.6 Q13.6 4.4 13.6 5.4 V22 Q13.6 23 12.6 23 H8.3" fill="none" stroke="#3f9ad2" stroke-width="1.61765" stroke-linecap="round" stroke-linejoin="round" transform="translate(420.6 611) scale(0.68)"/>
<path d="M14.4 8.2 L18 6.6 L23.4 21.4 L19.2 23 Z" fill="none" stroke="#3f9ad2" stroke-width="1.61765" stroke-linecap="round" stroke-linejoin="round" transform="translate(420.6 611) scale(0.68)"/>
<path d="M1036 625.4 H1043.4 L1039.7 629 Z" fill="#6a6a6a"/>
<path d="M9.4 643 H28.6 Q30 643 30 644.4 V661.4 Q30 662.8 28.6 662.8 H9.4 Q8 662.8 8 661.4 V644.4 Q8 643 9.4 643 Z" fill="none" stroke="#0d7abf" stroke-width="1.5" stroke-linecap="round" stroke-linejoin="round"/>
<path d="M8 647.4 H30 M16.6 647.4 V662.8" fill="none" stroke="#0d7abf" stroke-width="1.3"/>
<path d="M9.6 650.6 H15.4 M9.6 654 H15.4 M9.6 657.4 H15.4 M9.6 660.4 H15.4" fill="none" stroke="#0d7abf" stroke-width="1.1"/>
<path d="M9.6 645.2 H11 M12.2 645.2 H13.6 M14.8 645.2 H16.2" fill="none" stroke="#0d7abf" stroke-width="1.1"/>
<circle cx="57" cy="650.6" r="9" fill="none" stroke="#0d7abf" stroke-width="1.4"/>
<path d="M64.4 658.6 L69.8 664.2" fill="none" stroke="#0d7abf" stroke-width="1.4" stroke-linecap="round" stroke-linejoin="round"/>
<text x="51.2" y="655" font-family="'Liberation Sans',sans-serif" font-size="11.5" font-weight="normal" letter-spacing="-0.5" fill="#0d7abf">be</text>
<path d="M104 658 V644 Q104 642.4 102.4 642.4 H83.6 Q82.2 642.4 82.2 643.8 V660.6 Q82.2 662 83.6 662 H95" fill="none" stroke="#0d7abf" stroke-width="1.5" stroke-linecap="round" stroke-linejoin="round"/>
<path d="M82.2 646.6 H104" fill="none" stroke="#0d7abf" stroke-width="1.3"/>
<path d="M83.8 644.4 H85.2 M86.4 644.4 H87.8 M89 644.4 H90.4" fill="none" stroke="#0d7abf" stroke-width="1.1"/>
<text x="84" y="659.4" font-family="'Liberation Sans',sans-serif" font-size="10.5" font-weight="normal" letter-spacing="-0.5" fill="#0d7abf">be</text>
<path d="M96 656.2 L105.4 660.6 L96 665.2 Z" fill="#0d7abf"/>
<path d="M395.8 645.2 Q397.4 644.2 398.2 645.4 L400 648.4 Q400.6 649.6 399.4 650.4 L398.4 651.2 Q399.8 654.4 403 656 L403.8 655 Q404.8 654 406 654.8 L408.2 656.4 Q409.2 657.4 408.2 658.4 Q406.4 660.2 404 659.2 Q396.6 656.4 394 648.6 Q393.6 646.4 395.8 645.2 Z" fill="none" stroke="#3f9ad2" stroke-width="1.1" stroke-linecap="round" stroke-linejoin="round"/>
</svg>
<span class="t" style="left:30.30px;top:6.02px;font-size:11.5px;color:#8c8c8c;letter-spacing:0.046px;">be [business express]</span>
<span class="t" style="left:415.24px;top:36.67px;font-size:12.5px;color:#fff;letter-spacing:0.211px;">business express smart [Test-System]</span>
<span class="t" style="left:136.24px;top:107.67px;font-size:12.5px;color:#3a3a3a;letter-spacing:0.380px;">Datum von</span>
<span class="t" style="left:318.24px;top:107.67px;font-size:12.5px;color:#3a3a3a;letter-spacing:0.328px;">Datum bis</span>
<span class="t" style="left:502.79px;top:107.67px;font-size:12.5px;color:#3a3a3a;letter-spacing:-0.145px;">Suche</span>
<span class="t" style="left:545.24px;top:107.67px;font-size:12.5px;color:#000;letter-spacing:0.246px;">Belege filtern</span>
<span class="t" style="left:771.79px;top:107.67px;font-size:12.5px;color:#3a3a3a;letter-spacing:0.307px;">Sortieren nach</span>
<span class="t" style="left:867.24px;top:107.67px;font-size:12.5px;color:#fff;letter-spacing:0.305px;">Beleg-Nummer</span>
<span class="t" style="left:52.79px;top:134.67px;font-size:12.5px;color:#8a8a8a;letter-spacing:-0.025px;">Seite</span>
<span class="t" style="left:88.75px;top:134.67px;font-size:12.5px;color:#8a8a8a;letter-spacing:0.000px;">1</span>
<span class="t" style="left:141.03px;top:134.67px;font-size:12.5px;color:#8a8a8a;letter-spacing:0.217px;">von 1</span>
<span class="t" style="left:342.31px;top:134.67px;font-size:12.5px;color:#000;letter-spacing:-0.016px;">100%</span>
<span class="t" style="left:429.16px;top:134.67px;font-size:12.5px;color:#000;letter-spacing:0.497px;">Original-Hintergrund</span>
<span class="t" style="left:752.25px;top:134.67px;font-size:12.5px;color:#3a3a3a;letter-spacing:0.034px;">Senden an</span>
<span class="t" style="left:73.04px;top:163.67px;font-size:12.5px;color:#fff;letter-spacing:0.168px;"><u>V</u>erkauf</span>
<span class="t" style="left:63.94px;top:244.67px;font-size:12.5px;color:#fff;letter-spacing:0.989px;-webkit-text-stroke:0.25px #fff;">Angebote</span>
<span class="t" style="left:26.79px;top:313.67px;font-size:12.5px;color:#000;letter-spacing:0.319px;">Service-Anforderungen</span>
<span class="t" style="left:30.83px;top:382.67px;font-size:12.5px;color:#000;letter-spacing:0.275px;">Eing.-Kundenaufträge</span>
<span class="t" style="left:28.58px;top:451.67px;font-size:12.5px;color:#000;letter-spacing:0.374px;">Auftragsbestätigungen</span>
<span class="t" style="left:82.31px;top:502.67px;font-size:12.5px;color:#fff;letter-spacing:0.077px;"><u>E</u>inkauf</span>
<span class="t" style="left:71.31px;top:527.67px;font-size:12.5px;color:#fff;letter-spacing:0.572px;"><u>P</u>roduktion</span>
<span class="t" style="left:74.79px;top:552.67px;font-size:12.5px;color:#fff;letter-spacing:0.286px;"><u>S</u>onstiges</span>
<span class="t" style="left:66.88px;top:577.67px;font-size:12.5px;color:#fff;letter-spacing:0.005px;">Alle Bereiche</span>
<span class="t" style="left:222.38px;top:166.67px;font-size:12.5px;color:#fff;letter-spacing:0.490px;">Angebote</span>
<span class="t" style="left:284.22px;top:166.67px;font-size:12.5px;color:#fff;letter-spacing:0.000px;">/</span>
<span class="t" style="left:292.24px;top:166.67px;font-size:12.5px;color:#fff;letter-spacing:0.308px;">Beleg-Nummer</span>
<span class="t" style="left:384.93px;top:166.67px;font-size:12.5px;color:#fff;letter-spacing:-0.072px;">100028</span>
<span class="t" style="left:434.99px;top:166.67px;font-size:12.5px;color:#fff;letter-spacing:0.000px;">/</span>
<span class="t" style="left:443.39px;top:166.67px;font-size:12.5px;color:#fff;letter-spacing:0.099px;">Lfd.Nr.</span>
<span class="t" style="left:486.14px;top:166.67px;font-size:12.5px;color:#fff;letter-spacing:0.000px;">1</span>
<span class="t" style="left:498.16px;top:166.67px;font-size:12.5px;color:#fff;letter-spacing:0.000px;">/</span>
<span class="t" style="left:505.83px;top:166.67px;font-size:12.5px;color:#fff;letter-spacing:0.205px;">Beleg-Datum</span>
<span class="t" style="left:585.43px;top:166.67px;font-size:12.5px;color:#fff;letter-spacing:-0.117px;">05.06.2015</span>
<span class="t" style="left:652.08px;top:166.67px;font-size:12.5px;color:#fff;letter-spacing:-0.329px;">19:53</span>
<span class="t" style="left:687.62px;top:166.67px;font-size:12.5px;color:#fff;letter-spacing:0.000px;">/</span>
<span class="t" style="left:695.64px;top:166.67px;font-size:12.5px;color:#fff;letter-spacing:0.157px;">Stammdaten-Referenz</span>
<span class="t" style="left:829.08px;top:166.67px;font-size:12.5px;color:#fff;letter-spacing:-0.049px;">10000000</span>
<span class="t" style="left:889.62px;top:166.67px;font-size:12.5px;color:#fff;letter-spacing:0.000px;">/</span>
<span class="t" style="left:897.10px;top:166.67px;font-size:12.5px;color:#fff;letter-spacing:0.167px;">Benutzer-Nummer</span>
<span class="t" style="left:1007.75px;top:166.67px;font-size:12.5px;color:#fff;letter-spacing:0.190px;">065</span>
<span class="t" style="left:1032.99px;top:166.67px;font-size:12.5px;color:#fff;letter-spacing:0.000px;">/</span>
<span class="t" style="left:590.03px;top:183.67px;font-size:12.5px;color:#fff;letter-spacing:0.374px;">Abteilung 000</span>
<span class="t" style="left:218.81px;top:211.67px;font-size:12.5px;color:#000;letter-spacing:0.356px;">Beleg-Art</span>
<span class="t" style="left:343.97px;top:211.67px;font-size:12.5px;color:#000;letter-spacing:0.328px;">Datum</span>
<span class="t" style="left:419.68px;top:211.67px;font-size:12.5px;color:#000;letter-spacing:-0.215px;">Zeit</span>
<span class="t" style="left:460.64px;top:211.67px;font-size:12.5px;color:#000;letter-spacing:0.450px;">Standort</span>
<span class="t" style="left:518.83px;top:211.67px;font-size:12.5px;color:#000;letter-spacing:0.410px;">Name 1</span>
<span class="t" style="left:719.11px;top:211.67px;font-size:12.5px;color:#000;letter-spacing:0.027px;">Strasse</span>
<span class="t" style="left:218.81px;top:233.67px;font-size:12.5px;color:#000;letter-spacing:0.568px;">Beleg-Nr.</span>
<span class="t" style="left:344.40px;top:233.67px;font-size:12.5px;color:#000;letter-spacing:0.342px;">erstellt von</span>
<span class="t" style="left:518.83px;top:233.67px;font-size:12.5px;color:#000;letter-spacing:0.645px;">Name 2</span>
<span class="t" style="left:718.97px;top:233.67px;font-size:12.5px;color:#000;letter-spacing:0.346px;">Plz/Ort</span>
<span class="t" style="left:219.58px;top:255.67px;font-size:12.5px;color:#000;letter-spacing:0.576px;">Angebot</span>
<span class="t" style="left:344.43px;top:255.67px;font-size:12.5px;color:#000;letter-spacing:-0.095px;">05.06.2015</span>
<span class="t" style="left:418.93px;top:255.67px;font-size:12.5px;color:#000;letter-spacing:0.119px;">19:53</span>
<span class="t" style="left:483.26px;top:255.67px;font-size:12.5px;color:#000;letter-spacing:0.000px;">0</span>
<span class="t" style="left:519.40px;top:255.67px;font-size:12.5px;color:#000;letter-spacing:0.055px;">Schmidt</span>
<span class="t" style="left:718.97px;top:255.67px;font-size:12.5px;color:#000;letter-spacing:0.315px;">Marienstraße 12</span>
<span class="t" style="left:218.93px;top:277.67px;font-size:12.5px;color:#000;letter-spacing:0.126px;">100028-1</span>
<span class="t" style="left:343.97px;top:277.67px;font-size:12.5px;color:#000;letter-spacing:0.098px;">Prinz, Amelie</span>
<span class="t" style="left:519.60px;top:277.67px;font-size:12.5px;color:#000;letter-spacing:0.144px;">GmbH &amp; Co. KG</span>
<span class="t" style="left:719.36px;top:277.67px;font-size:12.5px;color:#000;letter-spacing:0.267px;">80331 München</span>
<span class="t" style="left:9.73px;top:608.98px;font-size:14.5px;color:#aebfce;letter-spacing:0.229px;font-style:italic;">Belegdruck Rechnung...</span>
<span class="t" style="left:238.64px;top:608.98px;font-size:14.5px;color:#aebfce;letter-spacing:0.947px;font-style:italic;">Mahnungen</span>
<span class="t" style="left:443.73px;top:608.98px;font-size:14.5px;color:#1a1a1a;letter-spacing:0.395px;font-style:italic;">Belegarchiv</span>
<span class="t" style="left:123.83px;top:642.67px;font-size:12.5px;color:#000;letter-spacing:0.059px;">Belegarchiv</span>
<span class="t" style="left:419.83px;top:642.67px;font-size:12.5px;color:#000;letter-spacing:0.205px;">Mo, 16. Okt 2023, KW.42</span>
<span class="t" style="left:578.84px;top:642.67px;font-size:12.5px;color:#000;letter-spacing:0.006px;">08:47</span>
<span class="t" style="left:624.79px;top:642.67px;font-size:12.5px;color:#000;letter-spacing:0.148px;">Sonnenberg, Kyra (066)</span>
<span class="t" style="left:776.84px;top:642.67px;font-size:12.5px;color:#000;letter-spacing:0.361px;">0 : Global-Abteilung</span>
<span class="t" style="left:907.77px;top:642.67px;font-size:12.5px;color:#000;letter-spacing:0.188px;">000 : business express</span>
</div>
</body>
</html>
